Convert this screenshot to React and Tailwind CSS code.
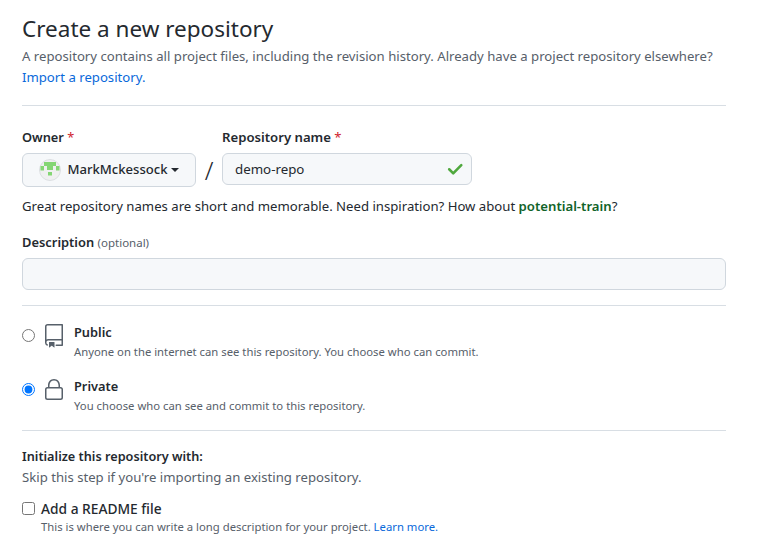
import React from "react";

function Req() {
  return <span className="font-normal text-[#cf222e]"> *</span>;
}

function RepoIcon() {
  return (
    <svg width="24" height="24" viewBox="0 0 24 24" fill="#57606a">
      <path d="M3 2.75A2.75 2.75 0 0 1 5.75 0h14.5a.75.75 0 0 1 .75.75v20.5a.75.75 0 0 1-.75.75h-6a.75.75 0 0 1 0-1.5h5.25v-4H6A1.5 1.5 0 0 0 4.5 18v.75c0 .716.43 1.334 1.05 1.605a.75.75 0 0 1-.6 1.374A3.251 3.251 0 0 1 3 18.75ZM19.5 1.5H5.75c-.69 0-1.25.56-1.25 1.25v12.651A2.989 2.989 0 0 1 6 15h13.5Z" />
      <path d="M7 18.25a.25.25 0 0 1 .25-.25h5a.25.25 0 0 1 .25.25v5.01a.25.25 0 0 1-.397.201l-2.206-1.604a.25.25 0 0 0-.294 0L7.397 23.46a.25.25 0 0 1-.397-.2Z" />
    </svg>
  );
}

function LockIcon() {
  return (
    <svg width="24" height="24" viewBox="0 0 24 24" fill="#57606a">
      <path d="M6 9V7.25C6 3.845 8.503 1 12 1s6 2.845 6 6.25V9h.5a2.5 2.5 0 0 1 2.5 2.5v8a2.5 2.5 0 0 1-2.5 2.5h-13A2.5 2.5 0 0 1 3 19.5v-8A2.5 2.5 0 0 1 5.5 9Zm-1.5 2.5v8a1 1 0 0 0 1 1h13a1 1 0 0 0 1-1v-8a1 1 0 0 0-1-1h-13a1 1 0 0 0-1 1Zm3-4.25V9h9V7.25c0-2.67-1.922-4.75-4.5-4.75-2.578 0-4.5 2.08-4.5 4.75Z" />
    </svg>
  );
}

function Avatar() {
  return (
    <svg width="22" height="22" viewBox="0 0 22 22" className="shrink-0">
      <circle cx="11" cy="11" r="10.5" fill="#f0f0f0" stroke="#dcdfe2" />
      <path d="M5 3h12v4H5z M1.5 7H5v4.5H1.5z M17 7h3.5v4.5H17z M8 7h6v4H8z M9 13h4v3.5H9z" fill="#84d673" />
    </svg>
  );
}

export default function App() {
  return (
    <div className="min-h-[544px] w-[769px] overflow-hidden bg-white pl-[22px] pt-[14px] font-['Noto_Sans',sans-serif] text-[13.17px] leading-[21px] text-[#24292f]">
      <div className="w-[704px]">
        <h1 className="text-[22.5px] font-normal leading-[30px]">Create a new repository</h1>
        <p className="mt-[2px] text-[#57606a]">
          A repository contains all project files, including the revision history. Already have a project repository elsewhere?{" "}
          <a className="text-[#0969da]">Import a repository.</a>
        </p>
        <hr className="mt-[17px] border-[#d8dee4]" />

        <div className="mt-[21px] flex items-start">
          <div>
            <div className="text-[12.8px] font-semibold">Owner<Req /></div>
            <div className="mt-[5px] flex h-[34px] w-[174px] items-center justify-center gap-[6px] rounded-md border border-[#d0d7de] bg-[#f6f8fa] text-[13.1px] font-medium">
              <Avatar />
              <span className="-mt-[2px]">MarkMckessock</span>
              <span className="-ml-[3px] h-0 w-0 border-x-[4px] border-t-[4px] border-x-transparent border-t-[#24292f]" />
            </div>
          </div>
          <div className="mt-[26px] flex h-[34px] w-[26px] items-center justify-center text-[25px] font-light text-[#24292f]">/</div>
          <div>
            <div className="font-semibold">Repository name<Req /></div>
            <div className="mt-[5px] flex h-[32px] w-[250px] items-center justify-between rounded-md border border-[#d0d7de] bg-[#f6f8fa] pl-3 pr-[7px] text-[13.3px]">
              <span>demo-repo</span>
              <svg width="17" height="17" viewBox="0 0 16 16" fill="#4fa83d">
                <path d="M14.3 3.1a1.2 1.2 0 0 1 0 1.7l-7.6 7.6a1.2 1.2 0 0 1-1.7 0L1.2 8.6a1.2 1.2 0 0 1 1.7-1.7l2.95 2.95 6.75-6.75a1.2 1.2 0 0 1 1.7 0Z" />
              </svg>
            </div>
          </div>
        </div>

        <p className="mt-[9px]">
          Great repository names are short and memorable. Need inspiration? How about{" "}
          <span className="font-semibold text-[#116329]">potential-train</span>?
        </p>

        <div className="mt-[15px] text-[12.9px] font-semibold">
          Description <span className="text-[11.5px] font-normal text-[#57606a]">(optional)</span>
        </div>
        <div className="mt-[5px] h-[32px] rounded-md border border-[#d0d7de] bg-[#f6f8fa]" />
        <hr className="mt-[15px] border-[#d8dee4]" />

        <div className="mt-[16px] flex items-start">
          <input type="radio" name="v" readOnly className="mt-[7px] h-[13px] w-[13px]" />
          <div className="ml-[7px] mt-[2px]"><RepoIcon /></div>
          <div className="ml-[8px]">
            <div className="text-[12.8px] font-semibold">Public</div>
            <div className="text-[11.3px] leading-[18px] text-[#57606a]">Anyone on the internet can see this repository. You choose who can commit.</div>
          </div>
        </div>
        <div className="mt-[15px] flex items-start">
          <input type="radio" name="v" readOnly defaultChecked className="mt-[7px] h-[13px] w-[13px]" />
          <div className="ml-[7px] mt-[2px]"><LockIcon /></div>
          <div className="ml-[8px]">
            <div className="text-[12.8px] font-semibold">Private</div>
            <div className="text-[11.3px] leading-[18px] text-[#57606a]">You choose who can see and commit to this repository.</div>
          </div>
        </div>
        <hr className="mt-[15px] border-[#d8dee4]" />

        <div className="mt-[15px] text-[12.7px] font-semibold">Initialize this repository with:</div>
        <div className="text-[#57606a]">Skip this step if you're importing an existing repository.</div>
        <label className="mt-[10px] flex items-center">
          <input type="checkbox" readOnly className="h-[13px] w-[13px]" />
          <span className="ml-[6px] text-[13.75px] font-medium">Add a README file</span>
        </label>
        <div className="-mt-[1px] ml-[19px] text-[11.3px] leading-[18px] text-[#57606a]">
          This is where you can write a long description for your project. <a className="text-[#0969da]">Learn more.</a>
        </div>
      </div>
    </div>
  );
}
